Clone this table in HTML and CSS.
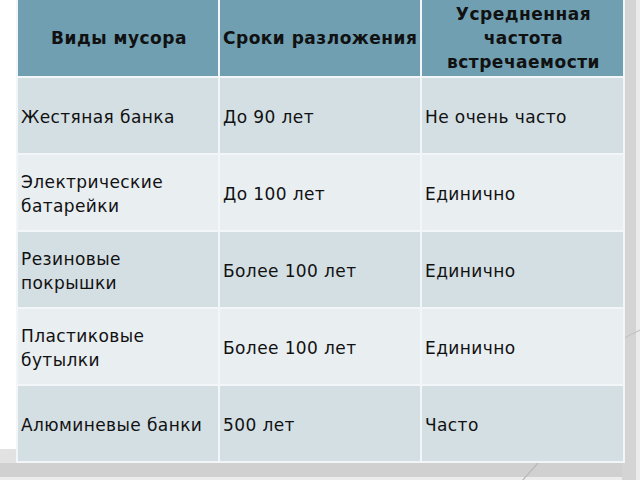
FILE: index.html
```html
<!DOCTYPE html>
<html lang="ru">
<head>
<meta charset="utf-8">
<link rel="stylesheet" href="styles.css">
</head>
<body>
<svg class="deco" width="640" height="480" viewBox="0 0 640 480" aria-hidden="true">
  <line x1="622" y1="339" x2="640" y2="330" stroke="#c4c4c4" stroke-width="1.2"/>
  <line x1="521" y1="482" x2="538" y2="463" stroke="#b8b8b8" stroke-width="1.2"/>
</svg>
<div class="slide">
  <table class="waste">
    <colgroup>
      <col class="c1"><col class="c2"><col class="c3">
    </colgroup>
    <tr class="head">
      <th class="center">Виды мусора</th>
      <th class="left">Сроки разложения</th>
      <th class="center">Усредненная частота встречаемости</th>
    </tr>
    <tr class="odd">
      <td>Жестяная банка</td><td>До 90 лет</td><td>Не очень часто</td>
    </tr>
    <tr class="even">
      <td>Электрические батарейки</td><td>До 100 лет</td><td>Единично</td>
    </tr>
    <tr class="odd">
      <td>Резиновые покрышки</td><td>Более 100 лет</td><td>Единично</td>
    </tr>
    <tr class="even">
      <td>Пластиковые бутылки</td><td>Более 100 лет</td><td>Единично</td>
    </tr>
    <tr class="odd">
      <td>Алюминевые банки</td><td>500 лет</td><td>Часто</td>
    </tr>
  </table>
</div>
</body>
</html>
```

FILE: styles.css
```css
html, body {
  margin: 0;
  padding: 0;
}
body {
  position: relative;
  width: 640px;
  height: 480px;
  overflow: hidden;
  font-family: "DejaVu Sans", sans-serif;
  color: #111;
  background:
    linear-gradient(to right, transparent 622px, #d4d4d4 622px, #d4d4d4 636px, #ebebeb 636px),
    linear-gradient(to bottom, transparent 449px, #e2e2e2 449px, #e2e2e2 463px, #d0d0d0 463px, #d0d0d0 477px, #ececec 477px),
    linear-gradient(to right, #ffffff 0px, #f3f3f3 640px);
}
.deco {
  position: absolute;
  left: 0;
  top: 0;
  z-index: 0;
}
.slide {
  position: relative;
  z-index: 1;
  padding-left: 16px;
}
.waste {
  border-collapse: collapse;
  width: 607px;
  table-layout: fixed;
}
.c1 { width: 202px; }
.c2 { width: 202px; }
.c3 { width: 203px; }
.waste th, .waste td {
  border: 2px solid #f2f6f8;
  padding: 0 1px 0 3px;
  vertical-align: middle;
}
.waste tr:first-child th { border-top: 0; }
.head {
  height: 77px;
  background: #6f9fb1;
}
.head th {
  font-size: 17px;
  font-weight: bold;
  letter-spacing: 0.5px;
  line-height: 24px;
  color: #111;
}
.head th.center { text-align: center; }
.head th.left { text-align: left; white-space: nowrap; }
.waste tr.odd, .waste tr.even {
  height: 77px;
}
.waste td {
  font-size: 17px;
  letter-spacing: 0.4px;
  line-height: 24px;
  text-align: left;
  padding-top: 3px;
}
.odd { background: #d4dfe4; }
.even { background: #e9eef1; }
```
